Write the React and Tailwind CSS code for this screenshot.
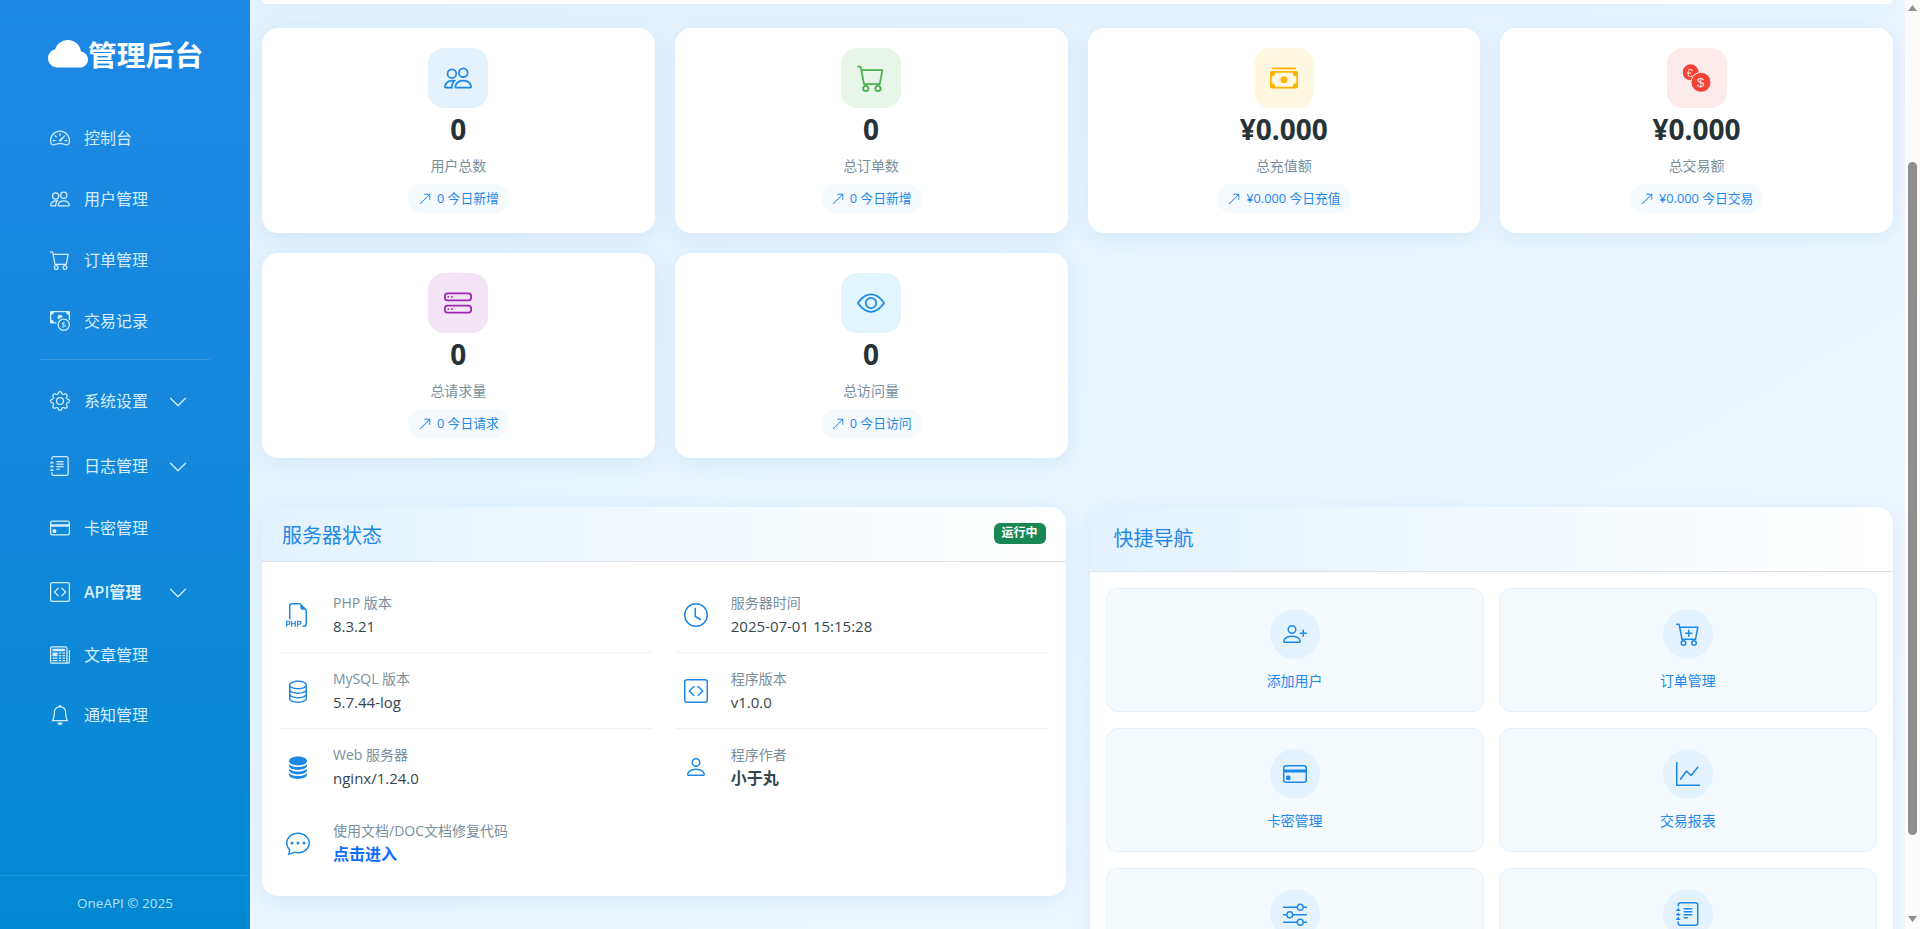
import React from "react";
import {
  BsSpeedometer2, BsPeople, BsCart, BsCashCoin, BsGear, BsJournalText, BsCreditCard, BsCodeSquare,
  BsNewspaper, BsBell, BsChevronDown, BsCashStack, BsHddStack, BsEye, BsArrowUpRight, BsFiletypePhp,
  BsDatabase, BsDatabaseFill, BsClock, BsPerson, BsChatDots, BsPersonPlus, BsCartPlus, BsGraphUp, BsSliders,
} from "react-icons/bs";

// two overlapping coins for the transaction card
const Coins = () => (
  <svg width="28" height="28" viewBox="0 0 28 28">
    <circle cx="7.7" cy="8.3" r="8" fill="#f44336" />
    <text x="3.8" y="12.5" fontSize="11" fill="#fbd5d2" fontFamily="Liberation Sans, sans-serif">€</text>
    <circle cx="18" cy="18.3" r="10" fill="#f44336" stroke="#fdeaea" strokeWidth="1" />
    <text x="14.1" y="23" fontSize="13" fill="#fde5e3" fontFamily="Liberation Sans, sans-serif">$</text>
  </svg>
);

const topNav = [
  { icon: BsSpeedometer2, label: "控制台" },
  { icon: BsPeople, label: "用户管理" },
  { icon: BsCart, label: "订单管理" },
  { icon: BsCashCoin, label: "交易记录" },
];

const bottomNav = [
  { icon: BsGear, label: "系统设置", arrow: true, h: "h-[64px]" },
  { icon: BsJournalText, label: "日志管理", arrow: true, h: "h-[66px]" },
  { icon: BsCreditCard, label: "卡密管理", h: "h-[58px]" },
  { icon: BsCodeSquare, label: "API管理", arrow: true, h: "h-[70px]", bold: true },
  { icon: BsNewspaper, label: "文章管理", h: "h-[56px]" },
  { icon: BsBell, label: "通知管理", h: "h-[63px]" },
];

const stats = [
  { icon: <BsPeople size={28} />, box: "bg-[#e3f2fd] text-[#1e88e5]", value: "0", label: "用户总数", today: "0 今日新增" },
  { icon: <BsCart size={28} />, box: "bg-[#e8f5e9] text-[#4caf50]", value: "0", label: "总订单数", today: "0 今日新增" },
  { icon: <BsCashStack size={28} />, box: "bg-[#fff8e1] text-[#ffb300]", value: "¥0.000", label: "总充值额", today: "¥0.000 今日充值" },
  { icon: <Coins />, box: "bg-[#fdeaea]", value: "¥0.000", label: "总交易额", today: "¥0.000 今日交易" },
  { icon: <BsHddStack size={28} />, box: "bg-[#f3e5f5] text-[#9c27b0]", value: "0", label: "总请求量", today: "0 今日请求" },
  { icon: <BsEye size={28} />, box: "bg-[#e1f5fe] text-[#1e88e5]", value: "0", label: "总访问量", today: "0 今日访问" },
];

const serverInfo = [
  { icon: BsFiletypePhp, label: "PHP 版本", value: "8.3.21" },
  { icon: BsClock, label: "服务器时间", value: "2025-07-01 15:15:28" },
  { icon: BsDatabase, label: "MySQL 版本", value: "5.7.44-log" },
  { icon: BsCodeSquare, label: "程序版本", value: "v1.0.0" },
  { icon: BsDatabaseFill, label: "Web 服务器", value: "nginx/1.24.0" },
  { icon: BsPerson, label: "程序作者", value: "小于丸", strong: true },
];

// the last row runs off the bottom of the window, only its icons show
const shortcuts = [
  { icon: BsPersonPlus, label: "添加用户" },
  { icon: BsCartPlus, label: "订单管理" },
  { icon: BsCreditCard, label: "卡密管理" },
  { icon: BsGraphUp, label: "交易报表" },
  { icon: BsSliders },
  { icon: BsJournalText },
];

const NavItem = ({ item, h }) => (
  <div className={`flex items-center pl-[50px] text-[#d6eefc] ${h}`}>
    <item.icon size={20} className="shrink-0" />
    <span className={`ml-[14px] w-[84px] text-base ${item.bold ? "font-semibold" : ""}`}>{item.label}</span>
    {item.arrow && <BsChevronDown size={20} className="mt-[2px]" />}
  </div>
);

const Sidebar = () => (
  <aside className="flex h-full w-[250px] shrink-0 flex-col bg-gradient-to-b from-[#1e88e5] to-[#0288d1]">
    <div className="flex h-[107px] items-start pl-[48px] pt-[35px] text-white">
      <svg width="40" height="40" viewBox="0 0 16 16" fill="currentColor" className="shrink-0">
        <path d="M4.406 3.342A5.53 5.53 0 0 1 8 2c2.69 0 4.923 2 5.166 4.579C14.758 6.804 16 8.137 16 9.773 16 11.569 14.502 13 12.687 13H3.781C1.708 13 0 11.366 0 9.318c0-1.763 1.266-3.223 2.942-3.593.143-.863.698-1.723 1.464-2.383z" />
      </svg>
      <span className="text-[28.8px] font-bold leading-[40px]">管理后台</span>
    </div>
    <nav>
      {topNav.map((item) => (
        <NavItem key={item.label} item={item} h="h-[61px]" />
      ))}
      <div className="mx-10 mb-[9px] mt-[8px] h-px bg-white/15" />
      {bottomNav.map((item) => (
        <NavItem key={item.label} item={item} h={item.h} />
      ))}
    </nav>
    <div className="mt-auto flex h-[54px] items-start justify-center border-t border-white/10 pt-[17px] text-[13.5px] leading-[20px] text-[#b4e1f8]">
      OneAPI © 2025
    </div>
  </aside>
);

const StatCard = ({ stat }) => (
  <div className="flex h-[205px] flex-col items-center rounded-2xl bg-white pt-5 shadow-[0_4px_20px_rgba(30,136,229,0.1)]">
    <div className={`flex h-[60px] w-[60px] items-center justify-center rounded-2xl ${stat.box}`}>{stat.icon}</div>
    <div className="mt-1 text-[28px] font-bold leading-[34px] text-[#263238]">{stat.value}</div>
    <div className="mt-[9px] text-sm leading-[21px] text-[#78909c]">{stat.label}</div>
    <div className="mt-2 flex h-[29px] items-center gap-[5px] rounded-full bg-[#f5faff] px-[10px] text-[12.8px] text-[#1e88e5]">
      <BsArrowUpRight size={14} />
      <span>{stat.today}</span>
    </div>
  </div>
);

const InfoRow = ({ icon: Icon, label, value, strong, last }) => (
  <div className={`flex h-[76px] items-center ${last ? "" : "border-b border-[#f0f2f5]"}`}>
    <div className="flex w-10 shrink-0 justify-center text-[#1e88e5]">
      <Icon size={24} />
    </div>
    <div className="ml-[15px]">
      <div className="text-sm leading-[21px] text-[#78909c]">{label}</div>
      <div className={`mt-[2px] leading-[23px] text-[#37474f] ${strong ? "text-base font-semibold" : "text-[15px] font-medium"}`}>{value}</div>
    </div>
  </div>
);

const ServerCard = () => (
  <div className="overflow-hidden rounded-2xl bg-white shadow-[0_4px_20px_rgba(30,136,229,0.1)]">
    <div className="flex h-[55px] items-center justify-between border-b border-[#dee2e6] bg-gradient-to-r from-[#e3f2fd] to-white px-5">
      <h2 className="pt-1 text-xl text-[#1e88e5]">服务器状态</h2>
      <span className="mt-[-2px] flex h-[21px] w-[52px] items-center justify-center rounded-md bg-[#198754] text-xs font-bold text-white">运行中</span>
    </div>
    <div className="grid grid-cols-2 gap-x-6 px-4 pt-[15px]">
      {serverInfo.map((info, i) => (
        <InfoRow key={info.label} {...info} last={i > 3} />
      ))}
      <div className="flex h-[76px] items-center">
        <div className="flex w-10 shrink-0 justify-center text-[#1e88e5]">
          <BsChatDots size={24} />
        </div>
        <div className="ml-[15px]">
          <div className="text-sm leading-[21px] text-[#78909c]">使用文档/DOC文档修复代码</div>
          <div className="mt-[2px] text-base font-bold leading-[23px] text-[#0d6efd]">点击进入</div>
        </div>
      </div>
    </div>
    <div className="h-[15px]" />
  </div>
);

const QuickNav = () => (
  <div className="rounded-2xl bg-white shadow-[0_4px_20px_rgba(30,136,229,0.1)]">
    <div className="flex h-[65px] items-center rounded-t-2xl border-b border-[#dee2e6] bg-gradient-to-r from-[#e3f2fd] to-white px-6">
      <h2 className="text-xl text-[#1e88e5]">快捷导航</h2>
    </div>
    <div className="grid grid-cols-2 gap-x-[15px] gap-y-4 px-4 pt-4">
      {shortcuts.map((s, i) => (
        <div key={i} className="flex h-[124px] flex-col items-center rounded-xl border border-[#e3f2fd] bg-[#f5faff] pt-5">
          <div className="flex h-[50px] w-[50px] items-center justify-center rounded-full bg-[#e3f2fd] text-[#1e88e5]">
            <s.icon size={24} />
          </div>
          {s.label && <div className="mt-[11px] text-sm leading-[21px] text-[#1e88e5]">{s.label}</div>}
        </div>
      ))}
    </div>
  </div>
);

const ScrollBar = () => (
  <div className="flex h-full w-[15px] shrink-0 flex-col items-center bg-[#fcfcfc] pt-[5px]">
    <svg width="9" height="6" viewBox="0 0 9 6"><path d="M4.5 0 9 6H0z" fill="#8f8f8f" /></svg>
    <div className="mt-[151px] h-[673px] w-[9px] rounded-full bg-[#8f8f8f]" />
    <svg width="9" height="6" viewBox="0 0 9 6" className="mt-auto mb-[7px]"><path d="M0 0h9L4.5 6z" fill="#8f8f8f" /></svg>
  </div>
);

export default function App() {
  return (
    <div className="flex h-[929px] w-[1920px] overflow-hidden font-['Open_Sans','Noto_Sans_CJK_SC',sans-serif]">
      <Sidebar />
      <main className="h-full min-w-0 flex-1 overflow-hidden bg-gradient-to-br from-[#e3f2fd] to-[#f0f7ff] px-3">
        <div className="h-1 rounded-b-2xl bg-white shadow-[0_4px_20px_rgba(30,136,229,0.1)]" />
        <div className="mt-6 grid grid-cols-4 gap-5">
          {stats.map((stat) => (
            <StatCard key={stat.label} stat={stat} />
          ))}
        </div>
        <div className="mt-[49px] grid grid-cols-2 items-start gap-6">
          <ServerCard />
          <QuickNav />
        </div>
      </main>
      <ScrollBar />
    </div>
  );
}
